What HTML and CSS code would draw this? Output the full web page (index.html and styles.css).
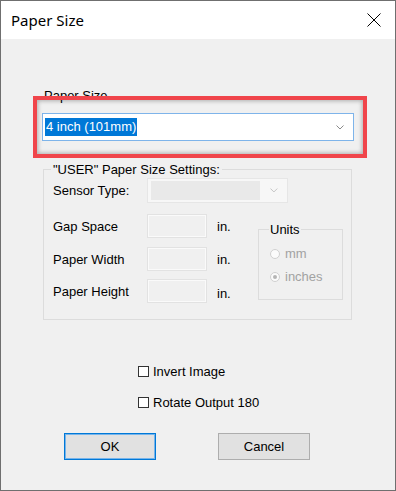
FILE: index.html
```html
<!DOCTYPE html>
<html>
<head>
<meta charset="utf-8">
<link rel="stylesheet" href="styles.css">
</head>
<body>
<div class="window">
  <div class="titlebar">
    <span class="title">Paper Size</span>
    <svg class="close" width="14" height="14" viewBox="0 0 14 14"><path d="M0.5 0.5 L13.5 13.5 M13.5 0.5 L0.5 13.5" stroke="#000" stroke-width="1" fill="none"/></svg>
  </div>
  <div class="content">
    <div class="paper-label">Paper Size</div>
    <div class="paper-select">
      <span class="sel-text">4 inch (101mm)</span>
      <svg class="chev" width="8" height="5" viewBox="0 0 8 5"><path d="M0.5 0.5 L4 4 L7.5 0.5" stroke="#8a8a8a" fill="none"/></svg>
    </div>
    <fieldset class="group">
      <legend class="group-legend">"USER" Paper Size Settings:</legend>
      <div class="sensor-row">
        <span class="lbl">Sensor Type:</span>
        <div class="combo"><div class="combo-field"></div><svg class="chev2" width="8" height="5" viewBox="0 0 8 5"><path d="M0.5 0.5 L4 4 L7.5 0.5" stroke="#c2c2c2" fill="none"/></svg></div>
      </div>
      <div class="lower">
        <div class="fields">
          <div class="frow"><span class="lbl">Gap Space</span><div class="tbox"></div><span class="unit">in.</span></div>
          <div class="frow"><span class="lbl">Paper Width</span><div class="tbox"></div><span class="unit">in.</span></div>
          <div class="frow"><span class="lbl">Paper Height</span><div class="tbox"></div><span class="unit low">in.</span></div>
        </div>
        <fieldset class="units">
          <legend class="units-legend">Units</legend>
          <div class="radio"><span class="rcircle"></span><span class="dis">mm</span></div>
          <div class="radio"><span class="rcircle checked"></span><span class="dis">inches</span></div>
        </fieldset>
      </div>
    </fieldset>
    <div class="checks">
      <div class="check"><span class="cbox"></span><span>Invert Image</span></div>
      <div class="check"><span class="cbox"></span><span>Rotate Output 180</span></div>
    </div>
    <div class="buttons">
      <div class="btn default">OK</div>
      <div class="btn">Cancel</div>
    </div>
    <div class="highlight"></div>
  </div>
</div>
</body>
</html>
```
FILE: styles.css
```css
html, body {
  margin: 0;
  padding: 0;
}
body {
  width: 396px;
  height: 491px;
  overflow: hidden;
  font-family: "Liberation Sans", Arial, sans-serif;
  font-size: 13px;
  color: #000;
  background: #f0f0f0;
}
.window {
  box-sizing: border-box;
  width: 396px;
  height: 491px;
  border: 1px solid #6f6f6f;
  background: #f0f0f0;
  display: flex;
  flex-direction: column;
}
.titlebar {
  height: 38px;
  background: #fff;
  display: flex;
  align-items: center;
  justify-content: space-between;
  padding: 0 14px 0 10px;
  flex: none;
}
.title {
  font-family: "Noto Sans", "Open Sans", sans-serif;
  font-size: 15px;
  color: #000;
  margin-top: -1px;
}
.close {
  display: block;
}
.content {
  position: relative;
  flex: 1;
  padding-top: 49px;
  line-height: 15px;
}
.paper-label {
  margin-left: 43px;
  height: 15px;
}
.paper-select {
  box-sizing: border-box;
  margin: 10px 0 0 41px;
  width: 312px;
  height: 28px;
  border: 1px solid #7eb4ea;
  background: #fff;
  display: flex;
  align-items: center;
  justify-content: space-between;
  padding: 0 9px 0 2px;
}
.sel-text {
  background: #0078d7;
  color: #fff;
  line-height: 18px;
  padding: 0 1px;
}
.chev, .chev2 {
  display: block;
}
.group {
  box-sizing: border-box;
  margin: 21px 0 0 42px;
  width: 309px;
  border: 1px solid #dcdcdc;
  padding: 0 0 16px 9px;
  min-width: 0;
}
.group-legend {
  padding: 0 2px;
  margin-left: -2px;
  line-height: 15px;
}
.sensor-row {
  display: flex;
  align-items: center;
  margin-top: 1px;
  height: 25px;
}
.lbl {
  width: 94px;
  flex: none;
}
.combo {
  box-sizing: border-box;
  width: 141px;
  height: 25px;
  border: 1px solid #e6e6e6;
  background: #f7f7f7;
  display: flex;
  align-items: center;
  padding: 0 9px 0 3px;
  gap: 10px;
}
.combo-field {
  width: 112px;
  height: 19px;
  background: #e9e9e9;
}
.lower {
  display: flex;
  margin-top: 11px;
}
.fields {
  width: 205px;
  display: flex;
  flex-direction: column;
  gap: 9px;
}
.frow {
  display: flex;
  align-items: center;
  height: 24px;
}
.frow:last-child {
  margin-top: -1px;
}
.tbox {
  box-sizing: border-box;
  width: 60px;
  height: 24px;
  border: 1px solid #e2e2e2;
  box-shadow: inset 0 0 0 1px #fafafa;
  background: #f0f0f0;
  flex: none;
}
.unit {
  margin-left: 10px;
}
.unit.low {
  margin-top: 5px;
}
.units {
  box-sizing: border-box;
  margin: 8px 0 0 0;
  width: 85px;
  height: 78px;
  border: 1px solid #dcdcdc;
  padding: 9px 0 0 11px;
  min-width: 0;
  display: flex;
  flex-direction: column;
  gap: 8px;
}
.units-legend {
  padding: 0 1px;
  margin-left: -1px;
  line-height: 15px;
}
.radio {
  display: flex;
  align-items: center;
  gap: 5px;
  height: 15px;
}
.rcircle {
  box-sizing: border-box;
  width: 10px;
  height: 10px;
  border-radius: 50%;
  border: 1px solid #d0d0d0;
  background: #fbfbfb;
  display: flex;
  align-items: center;
  justify-content: center;
}
.rcircle.checked::after {
  content: "";
  width: 4px;
  height: 4px;
  border-radius: 50%;
  background: #b5b5b5;
}
.dis {
  color: #a2a2a2;
}
.checks {
  margin-top: 44px;
  padding-left: 137px;
  display: flex;
  flex-direction: column;
  gap: 16px;
}
.check {
  display: flex;
  align-items: center;
  gap: 4px;
  height: 15px;
}
.cbox {
  box-sizing: border-box;
  width: 11px;
  height: 11px;
  border: 1px solid #333;
  background: #fff;
}
.buttons {
  margin-top: 23px;
  padding-left: 63px;
  display: flex;
  gap: 62px;
}
.btn {
  box-sizing: border-box;
  width: 92px;
  height: 27px;
  border: 1px solid #adadad;
  background: #e1e1e1;
  display: flex;
  align-items: center;
  justify-content: center;
}
.btn.default {
  border: 1px solid #0078d7;
  box-shadow: inset 0 0 0 1px #77b4ea;
}
.highlight {
  position: absolute;
  left: 32px;
  top: 57px;
  width: 334px;
  height: 62px;
  box-sizing: border-box;
  border: 4px solid #f0454b;
  box-shadow: inset 0 0 4px 1px rgba(0, 0, 0, 0.28);
  pointer-events: none;
}
```
